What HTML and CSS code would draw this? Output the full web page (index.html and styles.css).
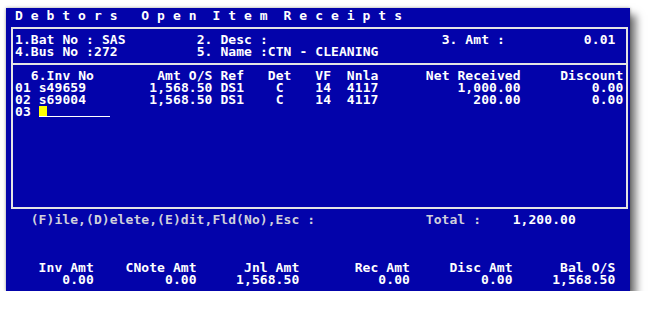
FILE: index.html
```html
<!DOCTYPE html>
<html lang="en">
<head>
    <meta charset="UTF-8">
    <meta name="viewport" content="width=device-width, initial-scale=1.0">
    <title>Debtors Open Item Receipts</title>
    <link rel="stylesheet" href="styles.css">
</head>
<body>
    <div class="screen">
        <div class="line title"> D e b t o r s   O p e n  I t e m  R e c e i p t s</div>

        <div class="box">
            <div class="fields">
                <div class="line">1.Bat No : SAS         2. Desc :                      3. Amt :          0.01</div>
                <div class="line">4.Bus No :272          5. Name :CTN - CLEANING</div>
            </div>
            <div class="items">
                <div class="line">  6.Inv No        Amt O/S Ref   Det   VF  Nnla      Net Received     Discount</div>
                <div class="line">01 s49659        1,568.50 DS1    C    14  4117          1,000.00         0.00</div>
                <div class="line">02 s69004        1,568.50 DS1    C    14  4117            200.00         0.00</div>
                <div class="line">03 <span class="field"><span class="cursor"></span></span></div>
            </div>
        </div>

        <div class="line"><span class="dim">   (F)ile,(D)elete,(E)dit,Fld(No),Esc :              Total :</span>    1,200.00</div>

        <div class="totals">
            <div class="line">    Inv Amt    CNote Amt      Jnl Amt       Rec Amt     Disc Amt      Bal O/S</div>
            <div class="line">       0.00         0.00     1,568.50          0.00         0.00     1,568.50</div>
        </div>
    </div>
</body>
</html>
```

FILE: styles.css
```css
:root {
    --cw: 7.9px;
}

body {
    margin: 0;
    background-color: #fff;
    font-family: "DejaVu Sans Mono", "Liberation Mono", monospace;
}

.screen {
    width: 624px;
    height: 283px;
    margin: 8px 0 0 6px;
    padding: 2px 0 0 1px;
    box-sizing: border-box;
    background-color: #0303aa;
    color: #fff;
    font-size: 13px;
    font-weight: bold;
    letter-spacing: 0.074px;
    line-height: 12px;
    box-shadow: 6px 7px 8px rgba(0, 0, 0, 0.55), 0 0 3px rgba(0, 0, 0, 0.35);
}

.line {
    height: 12px;
    white-space: pre;
}

.box {
    margin: 5px 2px 5px 4px;
    border: 2px solid #e4e4e4;
}

.fields {
    padding: 5px 0 5px 2px;
    border-bottom: 2px solid #e4e4e4;
}

.items {
    height: 132px;
    padding: 5px 0 5px 2px;
}

.field {
    display: inline-block;
    width: calc(var(--cw) * 9);
    height: 10px;
    border-bottom: 1px solid #fff;
    vertical-align: top;
}

.cursor {
    display: inline-block;
    width: var(--cw);
    height: 10px;
    background-color: #ffff00;
    vertical-align: top;
}

.dim {
    color: #d0d0dc;
}

.totals {
    margin-top: 36px;
}
```
